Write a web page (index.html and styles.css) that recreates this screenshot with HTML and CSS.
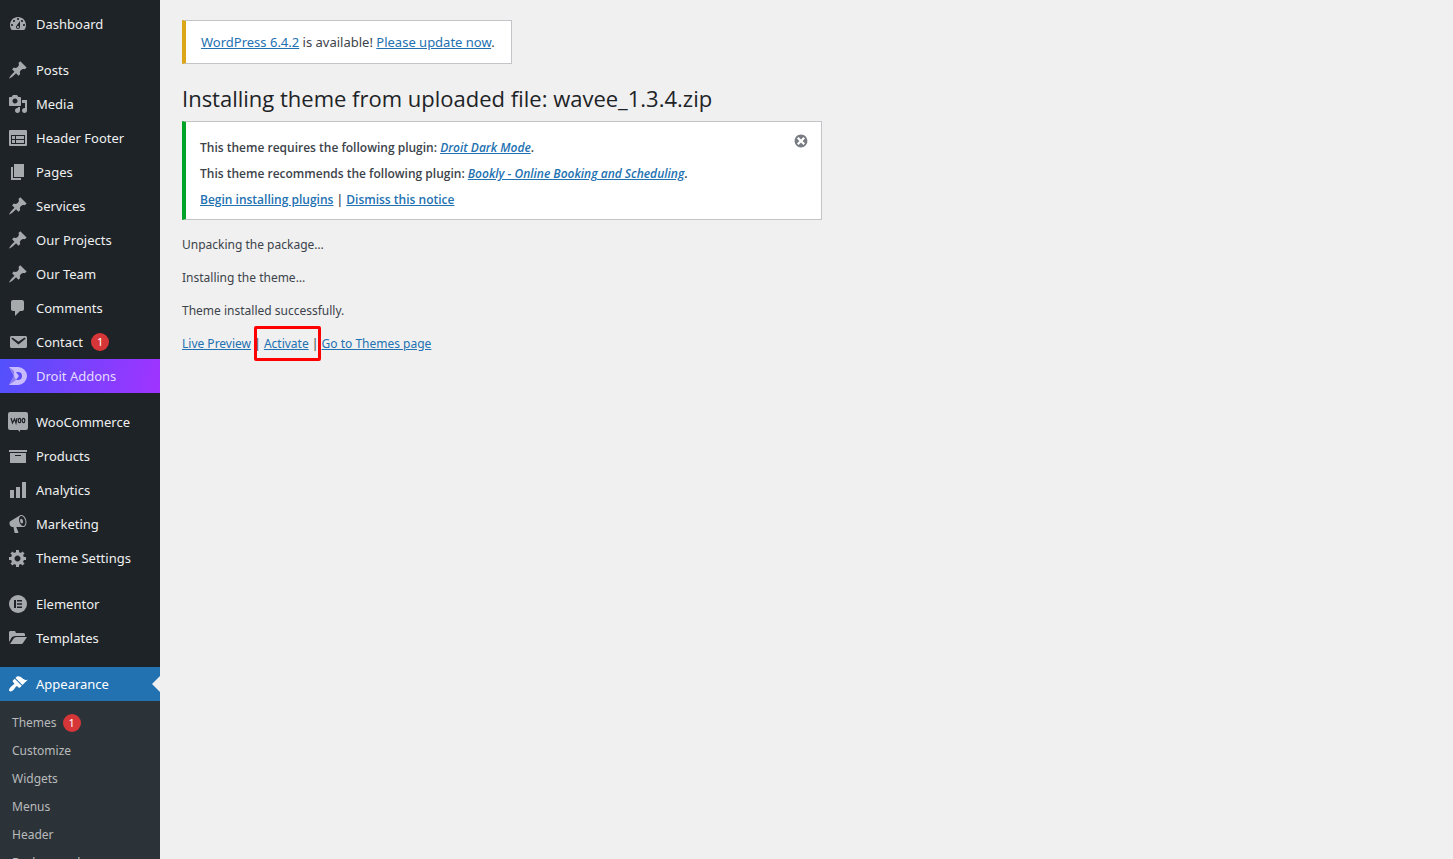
FILE: index.html
```html
<!DOCTYPE html>
<html lang="en">
<head>
<meta charset="utf-8">
<title>Installing theme</title>
<link rel="stylesheet" href="styles.css">
</head>
<body>
<svg class="sprite" aria-hidden="true">
  <symbol id="pin" viewBox="0 0 20 20"><path d="M10.44 3.02l1.82-1.82 6.36 6.35-1.83 1.82c-1.05-.68-2.48-.57-3.41.36l-.75.75c-.92.93-1.04 2.35-.35 3.41l-1.83 1.82-2.41-2.41-2.8 2.79c-.42.42-3.38 2.71-3.8 2.29s1.86-3.39 2.28-3.81l2.79-2.79L4.1 9.36l1.83-1.82c1.05.69 2.48.57 3.4-.36l.75-.75c.93-.92 1.05-2.35.36-3.41z"/></symbol>
</svg>
<div class="layout">
  <nav class="sidebar" aria-label="Main menu">
    <ul class="menu">
      <li><a class="item" href="#"><svg class="icon" viewBox="0 0 20 20"><path fill-rule="evenodd" d="M3.76 16h12.48c1.1-1.37 1.76-3.11 1.76-5 0-4.42-3.58-8-8-8s-8 3.58-8 8c0 1.89.66 3.63 1.76 5zM10 4c.55 0 1 .45 1 1s-.45 1-1 1-1-.45-1-1 .45-1 1-1zM6 6c.55 0 1 .45 1 1s-.45 1-1 1-1-.45-1-1 .45-1 1-1zm8 0c.55 0 1 .45 1 1s-.45 1-1 1-1-.45-1-1 .45-1 1-1zm-5.370 5.550L12 7v6c0 1.100-.9 2-2 2s-2-.9-2-2c0-.57.24-1.080.63-1.450zM4 10c.55 0 1 .45 1 1s-.45 1-1 1-1-.45-1-1 .45-1 1-1zm12 0c.55 0 1 .45 1 1s-.45 1-1 1-1-.45-1-1 .45-1 1-1zm-5 3c0-.55-.45-1-1-1s-1 .45-1 1 .45 1 1 1 1-.45 1-1z"/></svg>Dashboard</a></li>
    </ul>
    <ul class="menu">
      <li><a class="item" href="#"><svg class="icon"><use href="#pin"/></svg>Posts</a></li>
      <li><a class="item" href="#"><svg class="icon" viewBox="0 0 20 20"><path fill-rule="evenodd" d="M13 11V4c0-.55-.45-1-1-1h-1.670L9 1H5L3.670 3H2c-.55 0-1 .45-1 1v7c0 .55.45 1 1 1h10c.55 0 1-.45 1-1zM7 4.500c1.380 0 2.500 1.120 2.500 2.500S8.380 9.500 7 9.500 4.500 8.380 4.500 7 5.620 4.500 7 4.500zM14 6h5v10.500c0 1.380-1.120 2.500-2.500 2.500S14 17.880 14 16.500s1.120-2.500 2.500-2.500c.17 0 .34.02.5.05V9h-3V6zm-4 8.050V13h2v3.500c0 1.380-1.120 2.500-2.500 2.500S7 17.880 7 16.500 8.120 14 9.500 14c.17 0 .34.02.5.05z"/></svg>Media</a></li>
      <li><a class="item" href="#"><svg class="icon" viewBox="0 0 20 20"><path d="M2 2h16a1 1 0 0 1 1 1v14a1 1 0 0 1-1 1H2a1 1 0 0 1-1-1V3a1 1 0 0 1 1-1z"/><path class="cut" fill-rule="evenodd" d="M3 7h14v9H3zM4 8v3h3V8zM8 8v3h8V8zM4 12v3h3v-3zM8 12v3h8v-3z"/></svg>Header Footer</a></li>
      <li><a class="item" href="#"><svg class="icon" viewBox="0 0 20 20"><path d="M6 15V2h10v13H6zm-1 1h8v2H3V5h2v11z"/></svg>Pages</a></li>
      <li><a class="item" href="#"><svg class="icon"><use href="#pin"/></svg>Services</a></li>
      <li><a class="item" href="#"><svg class="icon"><use href="#pin"/></svg>Our Projects</a></li>
      <li><a class="item" href="#"><svg class="icon"><use href="#pin"/></svg>Our Team</a></li>
      <li><a class="item" href="#"><svg class="icon" viewBox="0 0 20 20"><path d="M5 2h9c1.100 0 2 .9 2 2v7c0 1.100-.9 2-2 2h-2l-5 5v-5H5c-1.100 0-2-.9-2-2V4c0-1.100.9-2 2-2z"/></svg>Comments</a></li>
      <li><a class="item" href="#"><svg class="icon" viewBox="0 0 20 20"><path fill-rule="evenodd" d="M3.870 4h13.250C18.370 4 19 4.590 19 5.790v8.420c0 1.190-.63 1.790-1.880 1.790H3.870c-1.250 0-1.880-.6-1.880-1.790V5.790c0-1.200.63-1.790 1.880-1.790zm6.620 8.600l6.740-5.530c.24-.2.43-.66.13-1.070-.29-.41-.82-.42-1.170-.17l-5.700 3.860L4.800 5.830c-.35-.25-.88-.24-1.170.17-.3.41-.11.87.13 1.070z"/></svg>Contact<span class="badge">1</span></a></li>
      <li><a class="item item-droit" href="#"><svg class="icon" viewBox="0 0 20 20"><path fill-rule="evenodd" d="M1 1h9a9 9 0 0 1 0 18H1l5-9zM8 6l3 4-3 4h2a4 4 0 0 0 0-8z"/><path class="shade" d="M1 1l5 4v5zM1 19l5-9 2 4z"/></svg>Droit Addons</a></li>
    </ul>
    <ul class="menu">
      <li><a class="item" href="#"><svg class="icon" viewBox="0 0 20 20"><path d="M2 0h16a2 2 0 0 1 2 2v14a2 2 0 0 1-2 2h-6v2l-2-2H2a2 2 0 0 1-2-2V2a2 2 0 0 1 2-2z"/><path class="cut-line" d="M3 6l1.500 5L6.500 7l1.500 4L9 6"/><ellipse class="cut-line" cx="11.500" cy="8.500" rx="1.300" ry="2.200"/><ellipse class="cut-line" cx="15.500" cy="8.500" rx="1.300" ry="2.200"/></svg>WooCommerce</a></li>
      <li><a class="item" href="#"><svg class="icon" viewBox="0 0 20 20"><path fill-rule="evenodd" d="M19 4v2H1V4h18zM2 7h16v10H2V7zm11 3V9H7v1h6z"/></svg>Products</a></li>
      <li><a class="item" href="#"><svg class="icon" viewBox="0 0 20 20"><path d="M18 18V2h-4v16h4zm-6 0V7H8v11h4zm-6 0v-8H2v8h4z"/></svg>Analytics</a></li>
      <li><a class="item" href="#"><svg class="icon" viewBox="0 0 20 20"><path fill-rule="evenodd" d="M18.150 5.940c.46 1.620.38 3.220-.02 4.480-.42 1.280-1.260 2.180-2.300 2.480-.16.06-.26.06-.4.06-.06.02-.12.02-.18.02-.06.02-.14.02-.22.02h-6.800l2.220 5.500c.02.14-.06.26-.14.34-.08.1-.24.16-.34.16H6.950c-.1 0-.26-.06-.34-.16-.08-.08-.16-.2-.14-.34l-1-5.500H4.250l-.02-.02c-.5.06-1.080-.18-1.540-.62s-.88-1.080-1.060-1.880c-.24-.8-.2-1.560-.02-2.200.18-.62.58-1.080 1.060-1.300l.02-.02 9-5.400c.1-.06.18-.1.24-.16.06-.04.14-.08.24-.12.16-.08.28-.12.5-.18 1.040-.3 2.240.1 3.220.98s1.840 2.240 2.260 3.860zm-2.580 5.980h-.02c.4-.1.74-.34 1.040-.7.58-.7.86-1.760.86-3.040 0-.64-.1-1.300-.28-1.980-.34-1.360-1.020-2.500-1.780-3.240s-1.680-1.100-2.460-.88c-.82.22-1.400.96-1.700 2-.32 1.040-.28 2.360.06 3.720.38 1.360 1 2.500 1.800 3.240.78.74 1.620 1.100 2.480.88zm-2.540-7.080c.22-.04.42-.02.62.04.38.16.76.48 1.020 1s.42 1.200.42 1.780c0 .3-.04.56-.12.8-.18.48-.44.84-.86.94-.34.1-.8-.06-1.140-.4s-.64-.86-.78-1.500c-.18-.62-.12-1.240.02-1.720s.48-.84.82-.94z"/></svg>Marketing</a></li>
      <li><a class="item" href="#"><svg class="icon" viewBox="0 0 20 20"><path fill-rule="evenodd" d="M18 12h-2.180c-.17.7-.44 1.350-.81 1.930l1.540 1.540-2.100 2.100-1.540-1.540c-.58.36-1.230.63-1.910.79V19H8v-2.180c-.68-.16-1.330-.43-1.910-.79l-1.540 1.540-2.120-2.120 1.540-1.540c-.36-.58-.63-1.230-.79-1.910H1V9.030h2.170c.16-.7.44-1.350.8-1.940L2.430 5.550l2.100-2.100 1.540 1.540c.58-.37 1.240-.64 1.930-.81V2h3v2.180c.68.16 1.330.43 1.910.79l1.540-1.540 2.120 2.120-1.540 1.540c.36.59.64 1.240.8 1.940H18V12zm-8.500 1.500c1.660 0 3-1.340 3-3s-1.340-3-3-3-3 1.340-3 3 1.340 3 3 3z"/></svg>Theme Settings</a></li>
    </ul>
    <ul class="menu">
      <li><a class="item" href="#"><svg class="icon" viewBox="0 0 20 20"><circle cx="10" cy="10" r="9"/><path class="cut" d="M6 6h2v8H6zM9 6h5v1.500H9zM9 9.250h5v1.500H9zM9 12.500h5V14H9z"/></svg>Elementor</a></li>
      <li><a class="item" href="#"><svg class="icon" viewBox="0 0 20 20"><path d="M1 14V4l1-1h5l1 2h8l1 1v2H7L4 9zM2 16l4-6 2-1h11l-4 6-1 1z"/></svg>Templates</a></li>
    </ul>
    <ul class="menu">
      <li><a class="item item-current" href="#" aria-current="page"><svg class="icon" viewBox="0 0 20 20"><path d="M14.480 11.060L7.410 3.990l1.500-1.500c.5-.56 2.300-.47 3.510.32 1.210.8 1.430 1.280 2.910 2.100 1.180.64 2.450 1.260 4.450.85zm-.71.71L6.700 4.700 4.930 6.470c-.39.39-.39 1.020 0 1.410l1.060 1.060c.39.39.39 1.030 0 1.420-.6.6-1.430 1.110-2.210 1.690-.35.26-.7.53-1.010.84C1.430 14.230.4 16.080 1.400 17.070c.99 1 2.840-.03 4.180-1.360.31-.31.58-.66.85-1.020.57-.78 1.080-1.610 1.690-2.210.39-.39 1.020-.39 1.410 0l1.060 1.060c.39.39 1.020.39 1.410 0z"/></svg>Appearance</a>
        <ul class="submenu">
          <li><a class="subitem" href="#">Themes<span class="badge">1</span></a></li>
          <li><a class="subitem" href="#">Customize</a></li>
          <li><a class="subitem" href="#">Widgets</a></li>
          <li><a class="subitem" href="#">Menus</a></li>
          <li><a class="subitem" href="#">Header</a></li>
          <li><a class="subitem" href="#">Background</a></li>
        </ul>
      </li>
    </ul>
  </nav>
  <main class="content">
    <div class="nag"><a href="#">WordPress 6.4.2</a> is available! <a href="#">Please update now</a>.</div>
    <h1 class="title">Installing theme from uploaded file: wavee_1.3.4.zip</h1>
    <section class="notice">
      <div class="notice-text">
        <p>This theme requires the following plugin: <a href="#"><em>Droit Dark Mode</em></a>.</p>
        <p>This theme recommends the following plugin: <a href="#"><em>Bookly - Online Booking and Scheduling</em></a>.</p>
        <p><a href="#">Begin installing plugins</a> | <a href="#">Dismiss this notice</a></p>
      </div>
      <button class="dismiss" type="button" aria-label="Dismiss this notice"><svg viewBox="0 0 20 20"><path fill-rule="evenodd" d="M10 2c4.420 0 8 3.580 8 8s-3.580 8-8 8-8-3.580-8-8 3.580-8 8-8zm5 11l-3-3 3-3-2-2-3 3-3-3-2 2 3 3-3 3 2 2 3-3 3 3z"/></svg></button>
    </section>
    <div class="log">
      <p>Unpacking the package…</p>
      <p>Installing the theme…</p>
      <p>Theme installed successfully.</p>
      <p><a href="#">Live Preview</a> | <a class="marked" href="#">Activate</a> | <a href="#">Go to Themes page</a></p>
    </div>
  </main>
</div>
</body>
</html>
```
FILE: styles.css
```css
* { box-sizing: border-box; }
body {
  margin: 0;
  background: #f0f0f0;
  color: #3c434a;
  font: 13px/20px "Segoe UI", "Noto Sans", "Open Sans", sans-serif;
}
ul { list-style: none; margin: 0; padding: 0; }
p { margin: 0; }
a { color: #2271b1; }
.sprite { display: none; }
.layout { display: flex; height: 100vh; overflow: hidden; }

.sidebar {
  flex: 0 0 160px;
  display: flex;
  flex-direction: column;
  gap: 12px;
  padding-top: 7px;
  background: #1d2327;
  overflow: hidden;
}
.item {
  display: flex;
  align-items: center;
  gap: 8px;
  height: 34px;
  padding-left: 8px;
  color: #f0f0f1;
  font-size: 13px;
  text-decoration: none;
  white-space: nowrap;
}
.icon { flex: none; width: 20px; height: 20px; fill: #a7aaad; }
.cut { fill: #1d2327; }
.cut-line { fill: none; stroke: #1d2327; stroke-width: 1.2; }
.shade { fill: #8d7df0; }
.badge {
  display: inline-block;
  min-width: 18px;
  height: 18px;
  border-radius: 9px;
  background: #d63638;
  color: #fff;
  font-size: 11px;
  line-height: 18px;
  text-align: center;
}
.item-droit { background: linear-gradient(100deg, #5251fb, #a033ff); color: #e4dcff; }
.item-droit .icon { fill: #c8bcff; }
.item-current { position: relative; background: #2271b1; color: #fff; }
.item-current .icon { fill: #fff; }
.item-current::after {
  content: "";
  position: absolute;
  top: 9px;
  right: 0;
  border: 8px solid transparent;
  border-left: 0;
  border-right-color: #f0f0f0;
}
.submenu { padding: 8px 0; background: #2c3338; }
.subitem {
  display: flex;
  align-items: center;
  gap: 6px;
  height: 28px;
  padding-left: 12px;
  color: #b8babc;
  font-size: 12px;
  text-decoration: none;
}

.content { flex: 1; min-width: 0; padding: 20px 22px; }
.nag {
  width: fit-content;
  padding: 11px 16px 11px 15px;
  border: 1px solid #c3c4c7;
  border-left: 4px solid #dba617;
  background: #fff;
  font-size: 13px;
}
.title {
  margin: 19px 0 8px;
  color: #1d2327;
  font-family: "Segoe UI", "Open Sans", sans-serif;
  font-size: 22px;
  font-weight: 400;
  line-height: 30px;
}
.notice {
  display: flex;
  justify-content: space-between;
  align-items: flex-start;
  max-width: 640px;
  padding: 11px 12px 9px 14px;
  border: 1px solid #c3c4c7;
  border-left: 4px solid #00a32a;
  background: #fff;
  font-family: "Segoe UI", "Open Sans", sans-serif;
  font-size: 12px;
  font-weight: 600;
}
.notice-text { display: grid; gap: 6px; padding-top: 5px; }
.dismiss { flex: none; display: flex; padding: 0; border: 0; background: none; cursor: pointer; }
.dismiss svg { width: 16px; height: 16px; fill: #787c82; }
.log { display: grid; gap: 13px; margin-top: 15px; font-size: 12px; }
.marked { position: relative; }
.marked::after {
  content: "";
  position: absolute;
  inset: -9px -12px -9px -10px;
  border: 3px solid #f00;
  border-radius: 2px;
}
```
